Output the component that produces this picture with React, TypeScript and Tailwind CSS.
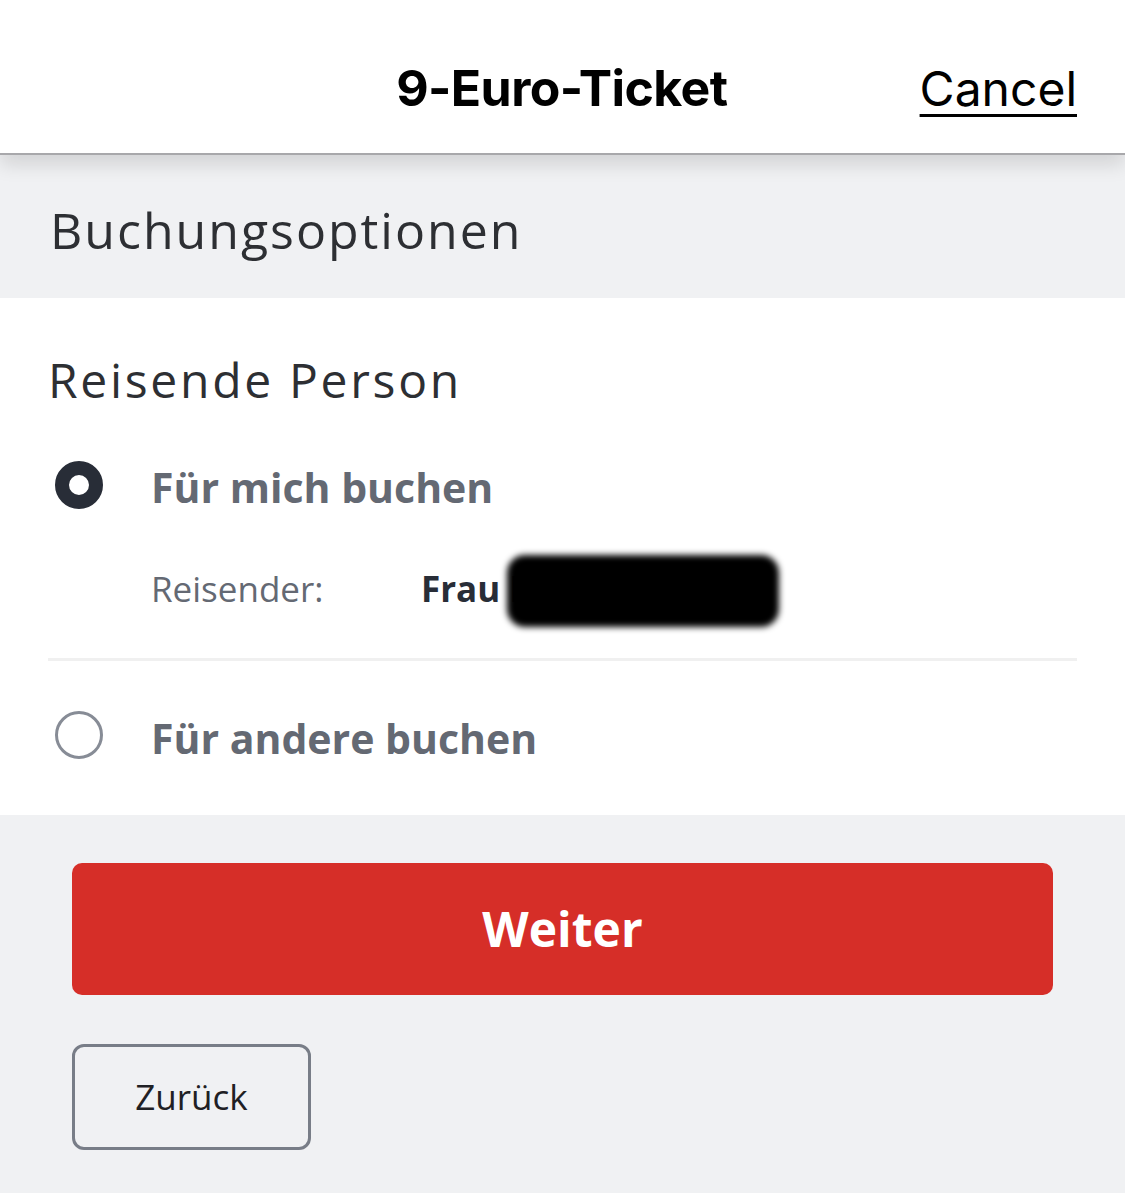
export default function App() {
  return (
    <div className="w-[1125px] h-[1193px] bg-[#f0f1f3] overflow-hidden" style={{ fontFamily: '"Open Sans", sans-serif' }}>
      {/* header */}
      <div className="relative z-10 h-[155px] bg-white border-b-2 border-[#a8a8ab] shadow-[0_10px_18px_rgba(0,0,0,0.12)] flex items-center justify-between px-[48px] pt-[24px]">
        <div className="w-[156px]" />
        <div className="text-[50px] font-bold text-black tracking-[-0.6px]" style={{ fontFamily: 'Inter, sans-serif' }}>
          9-Euro-Ticket
        </div>
        <button className="text-[48px] text-black underline underline-offset-[8px] decoration-[3px]" style={{ fontFamily: 'Inter, sans-serif' }}>
          Cancel
        </button>
      </div>

      {/* section title */}
      <div className="h-[143px] flex items-center px-[50px] pt-[8px]">
        <div className="text-[50px] text-[#2d2f33] tracking-[2px]">Buchungsoptionen</div>
      </div>

      {/* options */}
      <div className="bg-white h-[517px] px-[48px] pt-[58px]">
        <div className="text-[48px] text-[#2d2f33] tracking-[2.7px] leading-none">Reisende Person</div>

        <div className="flex items-center mt-[53px]">
          <div className="w-[48px] h-[48px] rounded-full border-[14px] border-[#282d37] ml-[7px] mb-[6px]" />
          <div className="ml-[48px] text-[41px] font-bold text-[#646973]">Für mich buchen</div>
        </div>

        <div className="flex items-center mt-[44px] ml-[103px]">
          <div className="w-[270px] text-[35px] text-[#646973]">Reisender:</div>
          <div className="relative text-[35px] font-bold text-[#282d37]">
            Frau Nxxxxxxxxo
            {/* redaction */}
            <div className="absolute left-[86px] top-[-8px] w-[272px] h-[72px] rounded-[18px] bg-black blur-[3px]" />
          </div>
        </div>

        <div className="h-[3px] bg-[#f0f0f0] mt-[43px]" />

        <div className="flex items-center mt-[47px]">
          <div className="w-[48px] h-[48px] rounded-full border-[3px] border-[#878c96] ml-[7px] mb-[8px]" />
          <div className="ml-[48px] text-[41px] font-bold text-[#646973]">Für andere buchen</div>
        </div>
      </div>

      {/* actions */}
      <div className="px-[72px] pt-[48px]">
        <button className="w-full h-[132px] rounded-[10px] bg-[#d62e28] text-white text-[48px] font-bold">
          Weiter
        </button>
        <button className="mt-[49px] w-[239px] h-[106px] rounded-[12px] border-[3px] border-[#787d87] text-[35px] text-[#1f2024]">
          Zurück
        </button>
      </div>
    </div>
  );
}
